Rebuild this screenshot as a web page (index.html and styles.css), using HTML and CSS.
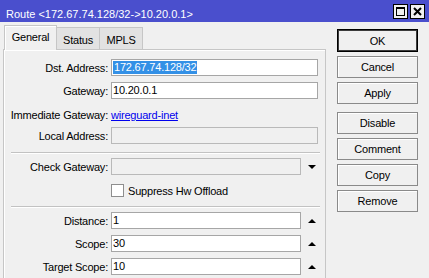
FILE: index.html
```html
<!DOCTYPE html>
<html lang="en">

<head>
    <meta charset="UTF-8" />
    <title>Route</title>
    <link rel="stylesheet" href="styles.css">
</head>

<body>

    <div class="titlebar">
        <span class="title">Route &lt;172.67.74.128/32-&gt;10.20.0.1&gt;</span>
        <div class="wbtns">
            <span class="wbtn">
                <svg width="13" height="13" viewBox="0 0 13 13">
                    <rect x="2.5" y="2.5" width="8" height="8" fill="none" stroke="#000" />
                    <rect x="2" y="2" width="9" height="2" fill="#000" />
                </svg>
            </span>
            <span class="wbtn">
                <svg width="13" height="13" viewBox="0 0 13 13">
                    <path d="M3 3 L10 10 M10 3 L3 10" stroke="#000" stroke-width="2" />
                </svg>
            </span>
        </div>
    </div>

    <div class="main">
        <div class="left">
            <div class="tabs">
                <div class="tab active">General</div>
                <div class="tab">Status</div>
                <div class="tab">MPLS</div>
            </div>

            <div class="panel">
                <div class="row">
                    <span class="label">Dst. Address:</span>
                    <div class="field"><span class="sel">172.67.74.128/32</span></div>
                </div>
                <div class="row">
                    <span class="label">Gateway:</span>
                    <div class="field">10.20.0.1</div>
                </div>
                <div class="row info">
                    <span class="label">Immediate Gateway:</span>
                    <a class="link" href="#">wireguard-inet</a>
                </div>
                <div class="row">
                    <span class="label">Local Address:</span>
                    <div class="field disabled"></div>
                </div>

                <div class="sep"></div>

                <div class="row">
                    <span class="label">Check Gateway:</span>
                    <div class="field short disabled"></div>
                    <span class="arrow down"></span>
                </div>
                <div class="row check">
                    <span class="label"></span>
                    <span class="box"></span>
                    <span>Suppress Hw Offload</span>
                </div>

                <div class="sep"></div>

                <div class="row">
                    <span class="label">Distance:</span>
                    <div class="field short">1</div>
                    <span class="arrow up"></span>
                </div>
                <div class="row">
                    <span class="label">Scope:</span>
                    <div class="field short">30</div>
                    <span class="arrow up"></span>
                </div>
                <div class="row">
                    <span class="label">Target Scope:</span>
                    <div class="field short">10</div>
                    <span class="arrow up"></span>
                </div>
            </div>
        </div>

        <div class="actions">
            <button class="btn default">OK</button>
            <button class="btn">Cancel</button>
            <button class="btn">Apply</button>
            <button class="btn spaced">Disable</button>
            <button class="btn">Comment</button>
            <button class="btn">Copy</button>
            <button class="btn">Remove</button>
        </div>
    </div>

</body>

</html>
```

FILE: styles.css
```css
* {
    box-sizing: border-box;
}

body {
    margin: 0;
    background: #f0f0f0;
    font-family: 'Liberation Sans', Arial, sans-serif;
    font-size: 11px;
    color: #000;
    overflow: hidden;
}

/* window title */
.titlebar {
    height: 22px;
    background: #4a4fcd;
    display: flex;
    justify-content: space-between;
    padding: 0 4px 0 6px;
}

.title {
    color: #fff;
    padding-top: 6px;
    line-height: 16px;
}

.wbtns {
    display: flex;
    gap: 2px;
    padding-top: 4px;
}

.wbtn {
    width: 15px;
    height: 15px;
    background: #f0f0f0;
    border: 1px solid #000;
    display: flex;
    align-items: center;
    justify-content: center;
}

.main {
    display: flex;
}

.left {
    margin-left: 3px;
    width: 323px;
}

/* tabs */
.tabs {
    display: flex;
    align-items: flex-end;
    height: 24px;
    margin-top: 3px;
    padding-left: 1px;
    letter-spacing: -0.2px;
}

.tab {
    height: 22px;
    width: 43px;
    border: 1px solid #c6c6c6;
    border-bottom: none;
    border-left: none;
    background: #e2e2e2;
    text-align: center;
    padding-top: 6px;
    line-height: 13px;
}

.tab.active {
    position: relative;
    z-index: 1;
    width: 53px;
    height: 25px;
    margin-bottom: -1px;
    border-left: 1px solid #c6c6c6;
    background: #f0f0f0;
    padding-top: 5px;
    box-shadow: inset 1px 1px #fff;
}

.panel {
    display: flex;
    flex-direction: column;
    border: 1px solid #c6c6c6;
    border-bottom: none;
    box-shadow: inset 1px 1px #fff;
    height: 240px;
    padding-top: 9px;
    letter-spacing: -0.2px;
}

.row {
    display: flex;
    align-items: center;
    height: 17px;
    margin-bottom: 6px;
}

.row.info {
    height: 16px;
    margin: 2px 0 4px;
}

.row.check {
    height: 13px;
    margin: 3px 0 7px;
}

.label {
    width: 104px;
    margin-right: 3px;
    text-align: right;
    white-space: nowrap;
}

.field {
    width: 207px;
    height: 17px;
    background: #fff;
    border: 1px solid #a6a6a6;
    padding-left: 1px;
    line-height: 15px;
    white-space: nowrap;
}

.field.short {
    width: 190px;
}

.field.disabled {
    background: #f0f0f0;
    border-color: #b9b9b9;
}

.sel {
    display: inline-block;
    background: #3390e6;
    color: #fff;
    line-height: 13px;
    padding: 0 1px;
}

.link {
    color: #0000ee;
}

.box {
    width: 13px;
    height: 13px;
    background: #fff;
    border: 1px solid #8e8e8e;
    margin-right: 4px;
}

.arrow {
    width: 0;
    height: 0;
    margin-left: 7px;
    border-left: 4px solid transparent;
    border-right: 4px solid transparent;
}

.arrow.down {
    border-top: 4px solid #000;
}

.arrow.up {
    border-bottom: 4px solid #000;
}

.sep {
    height: 2px;
    margin: 2px 5px 4px 7px;
    border-top: 1px solid #c2c2c2;
    border-bottom: 1px solid #fff;
}

/* side buttons */
.actions {
    display: flex;
    flex-direction: column;
    margin-left: 11px;
    width: 81px;
    padding-top: 7px;
}

.btn {
    height: 22px;
    margin-bottom: 4px;
    background: #f0f0f0;
    border: 1px solid #8a8a8a;
    box-shadow: inset 1px 1px #fff;
    font-family: inherit;
    font-size: 11px;
    letter-spacing: -0.2px;
    color: #000;
    padding: 0;
}

.btn.default {
    height: 23px;
    border-color: #000;
    box-shadow: inset 0 0 0 1px #3c3c3c;
}

.btn.spaced {
    margin-top: 4px;
}
```
